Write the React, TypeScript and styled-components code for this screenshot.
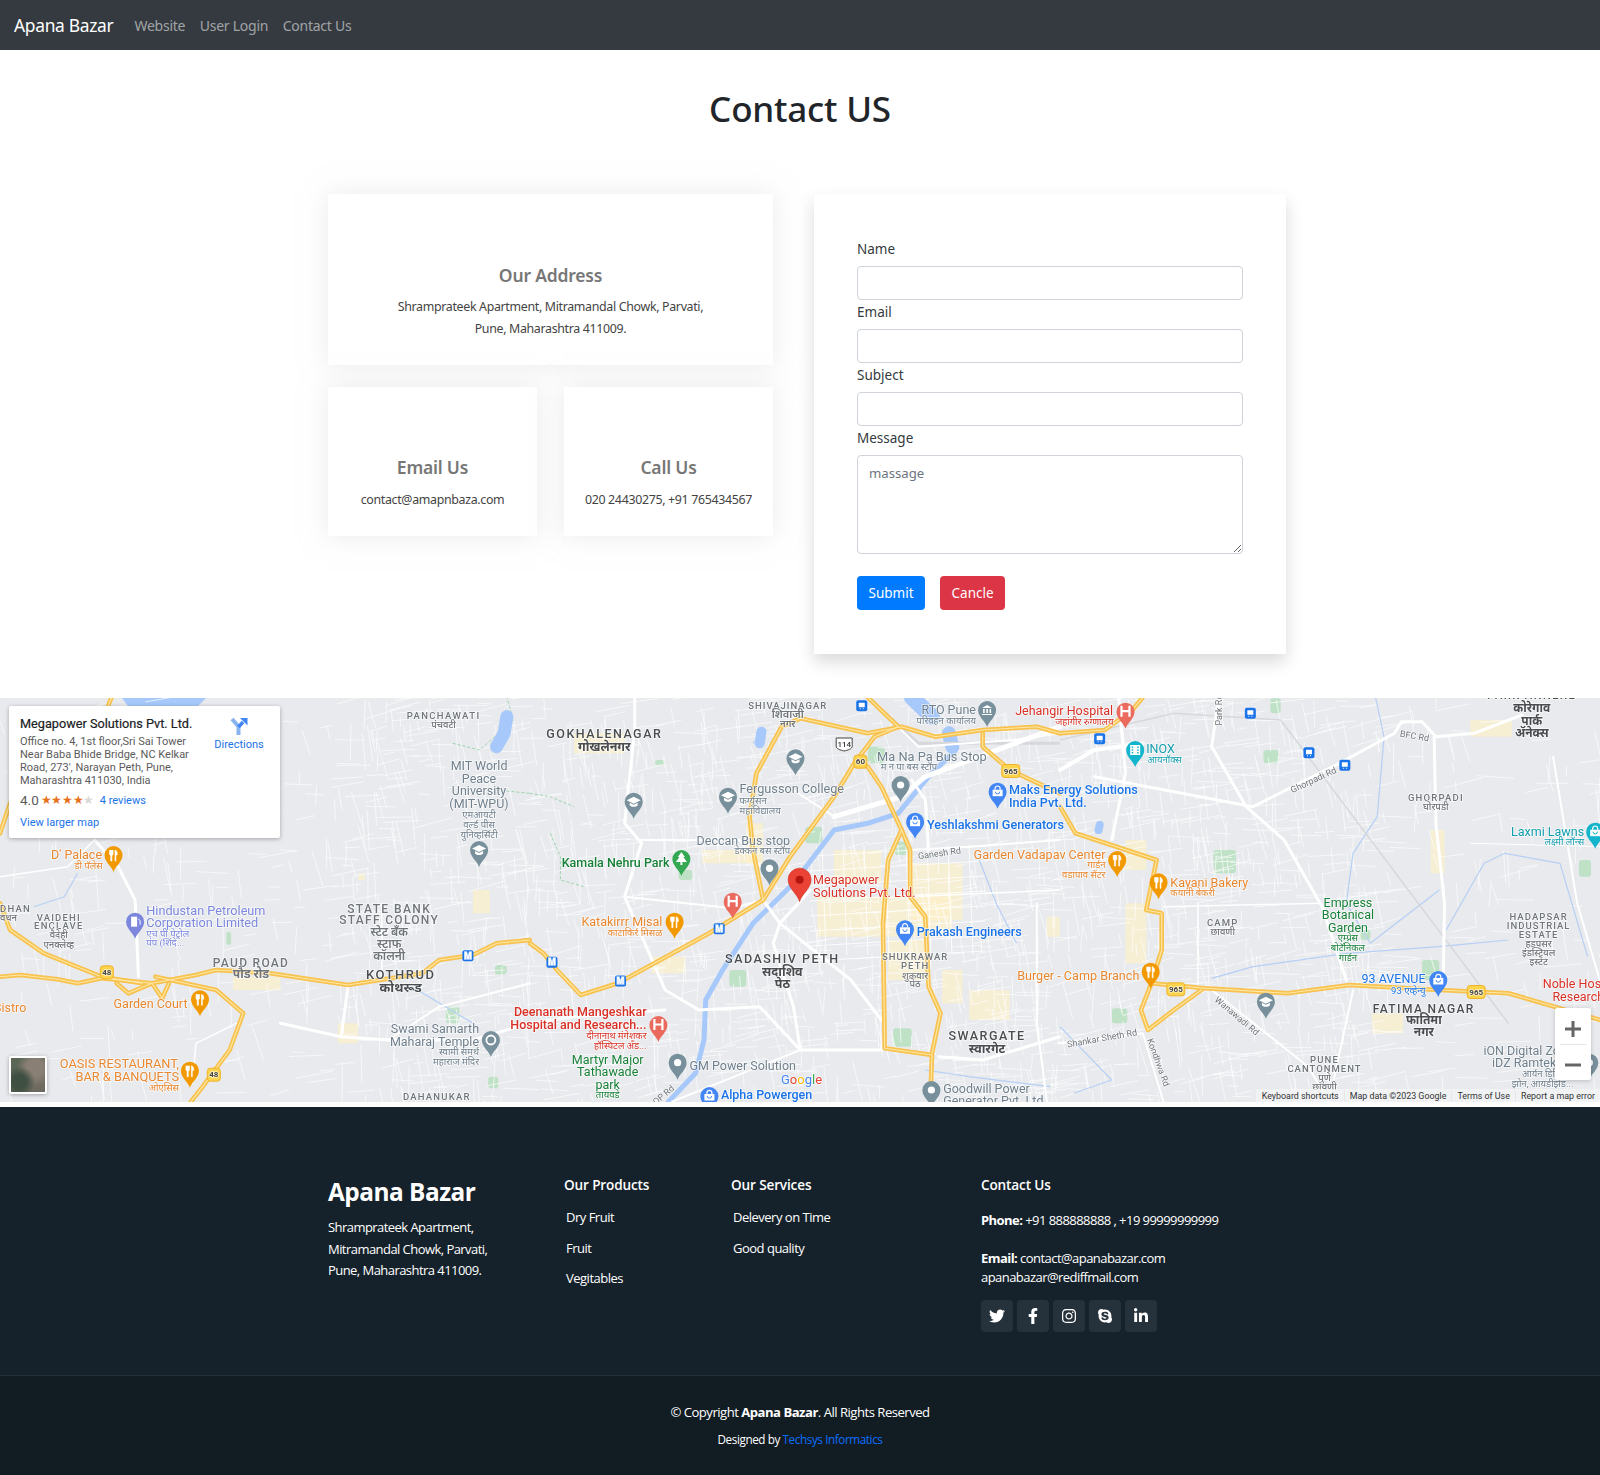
import React from 'react';
import styled, { createGlobalStyle } from 'styled-components';
import { FaTwitter, FaFacebookF, FaInstagram, FaSkype, FaLinkedinIn } from 'react-icons/fa';

const Global = createGlobalStyle`
  html, body { margin: 0; padding: 0; background: #fff; }
  body { font-family: "Noto Sans", "Open Sans", sans-serif; color: #212529; }
  * { box-sizing: border-box; }
`;

const Nav = styled.nav`
  height: 50px; background: #343a40; display: flex; align-items: center; padding: 0 14px;
`;
const Brand = styled.a`
  color: #fff; font-size: 17.4px; margin-right: 21px; letter-spacing: -0.3px;
`;
const NavLink = styled.a`
  color: rgba(255,255,255,.55); font-size: 14px; margin-right: 14.5px; letter-spacing: -0.25px;
`;
const Title = styled.h1`
  margin: 0; padding-top: 33px; height: 144px; text-align: center; font-size: 35px; font-weight: 500; line-height: 52px; letter-spacing: -0.2px;
`;
const Contact = styled.section`
  display: grid; grid-template-columns: 445px 472px; column-gap: 41px; padding-left: 328px; padding-bottom: 44px; align-items: start;
`;
const LeftCol = styled.div`
  display: grid; grid-template-columns: 209px 209px; column-gap: 27px; row-gap: 22px;
`;
const InfoBox = styled.div<{ $wide?: boolean }>`
  grid-column: ${p => (p.$wide ? '1 / 3' : 'auto')};
  height: ${p => (p.$wide ? '171px' : '149px')};
  padding-top: ${p => (p.$wide ? '68px' : '67px')};
  text-align: center; background: #fff; box-shadow: 0 0 24px rgba(214,215,216,.5);
`;
const BoxHead = styled.h3<{ $mb: number }>`
  margin: 0 0 ${p => p.$mb}px; font-size: 17.5px; line-height: 26px; font-weight: 600; color: #777; letter-spacing: -0.2px;
`;
const BoxText = styled.p`
  margin: 0; font-size: 12.4px; line-height: 22px; color: #444; letter-spacing: -0.33px;
`;
const FormCard = styled.form`
  height: 460px; padding: 43px 43px 0; background: #fff; box-shadow: 0 8px 16px rgba(0,0,0,.15);
`;
const Label = styled.label`
  display: block; font-size: 13.5px; line-height: 24px; height: 29px; color: #343a40;
`;
const Input = styled.input`
  display: block; width: 100%; height: 34px; border: 1px solid #ced4da; border-radius: 4px; background: #fff;
`;
const Area = styled.textarea`
  display: block; width: 100%; height: 99px; padding: 6px 11px; border: 1px solid #ced4da; border-radius: 4px; font: 13.2px "Noto Sans", sans-serif; line-height: 22px; resize: vertical;
  &::placeholder { color: #6c757d; }
`;
const Buttons = styled.div`
  display: flex; gap: 15px; margin-top: 22px;
`;
const Btn = styled.button<{ $bg: string }>`
  height: 34px; padding: 0 11.5px; border: 0; border-radius: 4px; background: ${p => p.$bg}; color: #fff; font: 13.5px "Noto Sans", sans-serif;
`;
const MapWrap = styled.div`
  position: relative; height: 404px; overflow: hidden; background: #e8eaed;
`;
const MapSvg = styled.svg`
  display: block; width: 1600px; height: 404px; font-family: Roboto, "Noto Sans", sans-serif; filter: blur(.3px);
`;
const Minor = styled.line`
  stroke: #fcfcfd; stroke-width: 1; opacity: .72;
`;
const Grid = styled.line`
  stroke: #fff; stroke-width: 1; opacity: .8;
`;
const RoadLine = styled.polyline<{ $w?: number }>`
  fill: none; stroke: #fff; stroke-width: ${p => p.$w ?? 3}; stroke-linejoin: round; stroke-linecap: round;
`;
const HighOuter = styled.polyline`
  fill: none; stroke: #f8c24f; stroke-width: 4.6; stroke-linejoin: round; stroke-linecap: round;
`;
const HighInner = styled.polyline`
  fill: none; stroke: #fde8a8; stroke-width: 1.1; stroke-linejoin: round; stroke-linecap: round;
`;
const River = styled.polyline<{ $w?: number }>`
  fill: none; stroke: #a6c8fa; stroke-width: ${p => p.$w ?? 4}; stroke-linejoin: round; stroke-linecap: round;
`;
const Creek = styled.polyline`
  fill: none; stroke: #b6cff5; stroke-width: 1.2; stroke-linejoin: round;
`;
const Trail = styled.polyline`
  fill: none; stroke: #9ed3ad; stroke-width: 1; stroke-dasharray: 3 2;
`;
const MapText = styled.text<{ $c: string; $s: number; $w?: number; $ls?: number }>`
  fill: ${p => p.$c}; font-size: ${p => p.$s}px; font-weight: ${p => p.$w ?? 400}; letter-spacing: ${p => p.$ls ?? 0}px;
  dominant-baseline: central; paint-order: stroke; stroke: rgba(255,255,255,.7); stroke-width: 1.5px;
`;
const InfoWin = styled.div`
  position: absolute; left: 9px; top: 8px; width: 271px; height: 132px; background: #fff; box-shadow: 0 1px 4px rgba(0,0,0,.3); border-radius: 2px; font-family: Roboto, sans-serif; padding: 9px 11px 0 11px; display: flex; justify-content: space-between;
`;
const InfoMain = styled.div` width: 190px; `;
const PlaceName = styled.div` font-size: 12.7px; font-weight: 400; line-height: 17px; color: #202124; white-space: nowrap; -webkit-text-stroke: .2px #202124; `;
const PlaceAddr = styled.div` font-size: 11px; line-height: 13px; color: #5b5b5b; margin-top: 3px; white-space: nowrap; `;
const Rating = styled.div` display: flex; align-items: center; height: 20px; margin-top: 3px; font-size: 13.5px; color: #5b5b5b; `;
const Stars = styled.span` color: #e7711b; font-size: 11.5px; margin-left: 2px; letter-spacing: -0.4px; `;
const GrayStar = styled.span` color: #d8d8d8; `;
const BlueLink = styled.a<{ $ml?: number; $mt?: number }>`
  color: #1a73e8; font-size: 11px; margin-left: ${p => p.$ml ?? 0}px; margin-top: ${p => p.$mt ?? 0}px; display: block; white-space: nowrap;
`;
const DirBox = styled.div` display: flex; flex-direction: column; align-items: center; width: 48px; margin-right: 6px; padding-top: 2px; `;
const Thumb = styled.div`
  position: absolute; left: 9px; bottom: 8px; width: 38px; height: 38px; border: 2px solid #fff; border-radius: 2px; box-shadow: 0 1px 4px rgba(0,0,0,.3); overflow: hidden;
  background: radial-gradient(circle at 25% 70%, #3f4f42 0 20%, transparent 45%), radial-gradient(circle at 70% 30%, #8a7f74 0 25%, transparent 55%), radial-gradient(circle at 75% 80%, #6e6a60 0 20%, transparent 50%), #5a6656;
`;
const Zoom = styled.div`
  position: absolute; right: 9px; top: 310px; width: 36px; height: 72px; background: #fff; border-radius: 2px; box-shadow: 0 1px 4px rgba(0,0,0,.2); display: flex; flex-direction: column; align-items: center; justify-content: space-around;
`;
const ZoomSep = styled.div` position: absolute; left: 5px; right: 5px; top: 36px; height: 1px; background: #e6e6e6; `;
const Attrib = styled.div`
  position: absolute; right: 0; bottom: 0; height: 13px; display: flex; align-items: center; background: rgba(245,245,245,.7); font: 8.9px Roboto, sans-serif; color: #333; padding-left: 1px;
`;
const AttribItem = styled.span` padding: 0 5px; white-space: nowrap; border-right: 1px solid #e6e6e6; &:last-child { border: 0; } `;
const Gap = styled.div` height: 5px; background: #fff; `;

const FooterTop = styled.footer`
  height: 269px; background: #16222b; color: #fff; border-bottom: 1px solid #22303b; padding: 62px 0 0 328px; display: grid; grid-template-columns: 236px 167px 250px 320px; font-family: "Open Sans", sans-serif;
`;
const FootBrand = styled.h3` margin: 8px 0 10px; font-size: 24.4px; line-height: 30px; font-weight: 700; letter-spacing: -0.5px; `;
const FootP = styled.p` margin: 0; font-size: 13px; line-height: 21.5px; letter-spacing: -0.55px; `;
const FootHead = styled.h4` margin: 0 0 12px; padding-top: 6px; font-size: 13.6px; line-height: 20px; font-weight: 600; letter-spacing: -0.15px; `;
const FootList = styled.ul` margin: 0; padding: 0 0 0 2px; list-style: none; `;
const FootItem = styled.li` font-size: 13px; height: 30.5px; line-height: 20px; letter-spacing: -0.5px; `;
const ContactLine = styled.p<{ $mt?: number }>` margin: ${p => p.$mt ?? 0}px 0 0; font-size: 13px; line-height: 19px; letter-spacing: -0.55px; white-space: nowrap; `;
const Socials = styled.div` display: flex; gap: 4px; margin-top: 13px; `;
const Social = styled.a`
  width: 32px; height: 32px; border-radius: 4px; background: #26323b; display: flex; align-items: center; justify-content: center; color: #fff; font-size: 16px;
`;
const FooterBottom = styled.div`
  height: 99px; background: #121c23; color: #fff; text-align: center; font-family: "Open Sans", sans-serif; padding-top: 26px;
`;
const Copy = styled.div` font-size: 13.1px; line-height: 20px; letter-spacing: -0.5px; `;
const Credit = styled.div` font-size: 11.7px; line-height: 20px; margin-top: 7px; letter-spacing: -0.4px; `;
const CreditLink = styled.a` color: #0d6efd; `;

const X0 = [0, 0, 0, 0, 530, 1060];
const F = [1, 1, 1, 2.96, 2.96, 2.9];
const X = (z: number, x: number) => X0[z] + x / F[z];
const Y = (y: number) => 690 + y / 3;
const pts = (z: number, a: number[][]) => a.map(([x, y]) => `${X(z, x).toFixed(1)},${Y(y).toFixed(1)}`).join(' ');

const highways: [number, number[][]][] = [
  [3, [[0, 860], [60, 855], [170, 868], [230, 880], [300, 865], [450, 880], [580, 855], [640, 840], [800, 850], [1030, 885], [1250, 850], [1300, 810], [1400, 795], [1470, 760], [1568, 750]]],
  [4, [[0, 760], [40, 790], [80, 840], [150, 915], [260, 880], [530, 730], [690, 630], [660, 480], [650, 380], [670, 250], [745, 110], [800, 85], [1000, 130], [1100, 110], [1200, 140], [1340, 120], [1500, 110], [1568, 130]]],
  [4, [[690, 630], [770, 500], [900, 320], [960, 220], [1020, 140], [1090, 110], [1000, 22]]],
  [4, [[960, 220], [1000, 230], [1040, 290], [1100, 420], [1060, 510], [1045, 700], [1050, 1075], [1190, 1095], [1185, 1235]]],
  [4, [[1100, 420], [1125, 480], [1125, 620], [1170, 680], [1180, 890], [1215, 970], [1190, 1090]]],
  [4, [[1340, 130], [1340, 170], [1420, 240], [1568, 310]]],
  [5, [[0, 130], [130, 120], [210, 60], [240, 22]]],
  [5, [[0, 350], [45, 430], [280, 510], [250, 660], [295, 670], [295, 780], [265, 880], [420, 895], [660, 910], [840, 885], [1100, 900], [1300, 910], [1568, 990]]],
  [5, [[265, 880], [235, 960], [255, 1020], [330, 960], [410, 900]]],
  [3, [[0, 640], [30, 720], [130, 790], [300, 860], [420, 880]]],
  [3, [[460, 860], [640, 900], [720, 970], [680, 1080], [600, 1190], [565, 1235]]],
  [3, [[345, 880], [380, 910], [450, 880], [480, 925], [500, 880]]],
  [3, [[330, 22], [320, 48]]],
  [3, [[0, 430], [30, 340]]],
];
const roads: [number, number[][], number?][] = [
  [3, [[280, 450], [350, 530], [400, 630], [410, 860]], 3],
  [3, [[1030, 890], [1010, 1040]], 3],
  [3, [[830, 1000], [1010, 1040], [1150, 1050], [1400, 1050], [1568, 1000]], 3],
  [3, [[1568, 880], [1300, 950], [1150, 1050]], 2],
  [3, [[1130, 640], [1130, 860]], 1.5],
  [3, [[700, 1000], [580, 1060], [570, 1180]], 1.5],
  [3, [[0, 560], [200, 530], [280, 450]], 1.5],
  [4, [[310, 22], [310, 120], [280, 400], [330, 460], [280, 620], [400, 900], [500, 960], [680, 950], [800, 1080], [1040, 1080]], 3],
  [4, [[330, 450], [620, 450], [690, 540]], 2],
  [4, [[280, 620], [600, 655], [690, 630]], 2],
  [4, [[0, 1000], [130, 980], [400, 960]], 3],
  [4, [[690, 630], [740, 700], [950, 870], [1040, 990]], 3],
  [4, [[740, 700], [720, 760], [780, 950], [800, 1080]], 3],
  [4, [[830, 600], [740, 700]], 3],
  [4, [[900, 380], [1100, 320], [1170, 260], [1568, 110]], 5],
  [4, [[780, 300], [900, 380]], 2],
  [4, [[1130, 270], [1170, 330], [1180, 480]], 3],
  [4, [[1000, 22], [1150, 170], [1430, 150], [1568, 130]], 2],
  [4, [[1210, 1100], [1340, 1110], [1568, 1040]], 3],
  [4, [[420, 1235], [800, 1080]], 2],
  [4, [[1500, 640], [1500, 1000], [1530, 1235]], 2],
  [4, [[1125, 480], [1300, 470], [1568, 450]], 2],
  [4, [[1125, 620], [1568, 600]], 1.5],
  [5, [[0, 240], [100, 180], [240, 160]], 4],
  [5, [[170, 20], [190, 250], [150, 450]], 3],
  [5, [[100, 260], [560, 350], [810, 220], [970, 130], [990, 95], [1050, 95], [1090, 140], [1200, 130], [1340, 75]], 3],
  [5, [[460, 20], [440, 170], [540, 350], [650, 450], [760, 650], [830, 870]], 3],
  [5, [[1085, 140], [1090, 400], [1115, 640], [1112, 860]], 3],
  [5, [[440, 900], [720, 1130], [780, 1235]], 2],
  [5, [[0, 1060], [240, 1030], [300, 1235]], 2],
  [5, [[850, 900], [780, 1235]], 2],
  [5, [[1430, 200], [1500, 640], [1568, 880]], 2],
  [5, [[1190, 460], [1568, 470]], 1],
  [5, [[300, 650], [750, 640]], 1.5],
  [5, [[400, 640], [400, 900]], 1.5],
];
const rivers: [number, number[][], number?][] = [
  [4, [[1240, 120], [1260, 180], [1180, 260], [1090, 370], [1000, 400], [900, 420], [780, 580], [660, 700], [570, 840], [520, 930], [515, 1050], [490, 1150], [410, 1235]], 5],
  [4, [[1130, 22], [1190, 80]], 16],
  [4, [[1240, 130], [1250, 170]], 14],
  [3, [[1500, 80], [1492, 130], [1470, 170]], 13],
  [4, [[685, 125], [680, 160]], 10],
  [5, [[115, 405], [112, 420]], 8],
];
const creeks: [number, number[][]][] = [
  [3, [[230, 550], [190, 620], [100, 650]]],
  [3, [[1220, 890], [1400, 1000]]],
  [5, [[440, 865], [560, 830], [830, 790], [1100, 770], [1300, 750]]],
  [5, [[1100, 600], [900, 760], [830, 640], [850, 490], [920, 380], [940, 140], [915, 22]]],
  [5, [[1120, 720], [1230, 520], [1290, 490], [1450, 520], [1530, 800]]],
  [5, [[0, 1010], [150, 1170], [40, 1210]]],
  [4, [[700, 120], [660, 160]]],
  [4, [[1330, 510], [1380, 640], [1440, 760]]],
  [4, [[1170, 1140], [1300, 1160], [1540, 1190]]],
];
const trails: [number, number[][]][] = [
  [3, [[1340, 160], [1420, 180], [1520, 90], [1500, 22]]],
  [3, [[1470, 300], [1568, 310]]],
  [4, [[0, 310], [60, 320], [130, 350]]],
  [4, [[60, 430], [90, 500], [90, 570], [160, 590]]],
];
const parks: [number, number, number, number, number][] = [
  [3, 1465, 825, 35, 28], [3, 1445, 1160, 30, 35], [3, 670, 725, 14, 40], [3, 1320, 950, 40, 50],
  [4, 590, 840, 50, 50], [4, 815, 410, 50, 50], [4, 1000, 170, 50, 50], [4, 1080, 455, 36, 40], [4, 1075, 1015, 55, 55], [4, 440, 540, 40, 30], [4, 370, 210, 30, 15],
  [5, 590, 180, 45, 40], [5, 445, 480, 65, 70], [5, 150, 955, 45, 45], [5, 1505, 510, 35, 50], [5, 1050, 810, 50, 60], [5, 870, 720, 30, 30], [5, 610, 25, 30, 45],
];
const blocks: [number, number, number, number, number][] = [
  [4, 850, 620, 400, 120], [4, 900, 480, 140, 100], [4, 1130, 520, 150, 170], [4, 1060, 750, 110, 120], [4, 640, 400, 50, 120], [4, 510, 480, 150, 40], [4, 1300, 900, 120, 90], [4, 130, 130, 150, 60], [4, 360, 800, 100, 50], [4, 1220, 840, 60, 100], [4, 1530, 680, 38, 60],
  [5, 190, 450, 60, 90], [5, 190, 640, 60, 180], [5, 905, 970, 90, 60], [5, 1075, 420, 40, 130], [5, 1190, 90, 120, 50],
  [3, 1000, 1000, 60, 60], [3, 1400, 600, 50, 70], [3, 1060, 550, 20, 20], [3, 690, 860, 140, 40],
];

type L = [number, number, number, string, string?, number?, number?, number?, number?];
// zone, x, y, text, anchor, size, weight, spacing, rotate
const C = { g: '#70757a', d: '#4a4d50', o: '#e8872f', b: '#1a73e8', r: '#d93025', v: '#7b86dc', gr: '#188038', t: '#129eaf', s: '#6f7f8c' };
const labels: [string, L[]][] = [
  [C.g, [
    [3, 1313, 77, 'PANCHAWATI', 'middle', 9.5, 500, 1.4], [3, 1313, 103, 'पंचवटी', 'middle', 9.5, 500],
    [3, 0, 656, 'DHAN', 'start', 9.5, 500, 1.2], [3, 0, 682, 'वधन', 'start', 9.5, 500],
    [3, 174, 681, 'VAIDEHI', 'middle', 9.5, 500, 1.2], [3, 174, 707, 'ENCLAVE', 'middle', 9.5, 500, 1.2], [3, 174, 733, 'वैदेही', 'middle', 9.5, 500], [3, 174, 763, 'एनक्लेव्ह', 'middle', 9.5, 500],
    [3, 1152, 657, 'STATE BANK', 'middle', 12, 500, 1.4], [3, 1152, 691, 'STAFF COLONY', 'middle', 12, 500, 1.3], [3, 1152, 726, 'स्टेट बँक', 'middle', 12, 600], [3, 1152, 763, 'स्टाफ', 'middle', 12, 600], [3, 1152, 797, 'कॉलनी', 'middle', 12, 600],
    [3, 743, 818, 'PAUD ROAD', 'middle', 12, 500, 1.3], [3, 743, 853, 'पौड रोड', 'middle', 12, 700],
    [3, 1293, 1220, 'DAHANUKAR', 'middle', 9.5, 500, 1.2],
    [4, 763, 47, 'SHIVAJINAGAR', 'middle', 9.5, 500, 1], [4, 763, 74, 'शिवाजी', 'middle', 11, 600], [4, 763, 100, 'नगर', 'middle', 9.5, 600],
    [4, 1140, 799, 'SHUKRAWAR', 'middle', 9.5, 500, 1], [4, 1140, 826, 'PETH', 'middle', 9.5, 500, 1.1], [4, 1140, 855, 'शुक्रवार', 'middle', 9.5, 500], [4, 1140, 880, 'पेठ', 'middle', 9.5, 500],
    [4, 1212, 490, 'Ganesh Rd', 'middle', 9, 400, 0, -8], [4, 395, 1215, 'OP Rd', 'middle', 9, 400, 0, -40],
    [5, 1028, 138, 'BFC Rd', 'middle', 9, 400, 0, 10], [5, 462, 60, 'Park Rd', 'middle', 9, 400, 0, -90], [5, 735, 270, 'Ghorpadi Rd', 'middle', 9, 400, 0, -25],
    [5, 1090, 322, 'GHORPADI', 'middle', 9.5, 500, 1.2], [5, 1090, 348, 'घोरपडी', 'middle', 9.5, 500],
    [5, 472, 697, 'CAMP', 'middle', 9.5, 500, 1.2], [5, 472, 723, 'छावणी', 'middle', 9.5, 500],
    [5, 1388, 678, 'HADAPSAR', 'middle', 9.5, 500, 1.1], [5, 1388, 705, 'INDUSTRIAL', 'middle', 9.5, 500, 1], [5, 1388, 732, 'ESTATE', 'middle', 9.5, 500, 1.1], [5, 1388, 760, 'हडपसर', 'middle', 9.5, 500], [5, 1388, 786, 'इंडस्ट्रियल', 'middle', 9.5, 500], [5, 1388, 813, 'इस्टेट', 'middle', 9.5, 500],
    [5, 513, 978, 'Wanawadi Rd', 'middle', 9, 400, 0, 40], [5, 122, 1045, 'Shankar Sheth Rd', 'middle', 9, 400, 0, -10], [5, 285, 1117, 'Kondhwa Rd', 'middle', 9, 400, 0, 70],
    [5, 767, 1109, 'PUNE', 'middle', 9.5, 500, 1.1], [5, 767, 1136, 'CANTONMENT', 'middle', 9.5, 500, 1], [5, 767, 1163, 'पुणे', 'middle', 9.5, 500], [5, 767, 1190, 'छावणी', 'middle', 9.5, 500],
  ]],
  [C.d, [
    [3, 1186, 853, 'KOTHRUD', 'middle', 13, 500, 1.5], [3, 1186, 891, 'कोथरूड', 'middle', 13, 700],
    [4, 220, 131, 'GOKHALENAGAR', 'middle', 12.5, 500, 1.5], [4, 220, 168, 'गोखलेनगर', 'middle', 12.5, 700],
    [4, 747, 806, 'SADASHIV PETH', 'middle', 12.5, 500, 1.5], [4, 747, 844, 'सदाशिव', 'middle', 12.5, 700], [4, 747, 881, 'पेठ', 'middle', 12.5, 700],
    [4, 1353, 1037, 'SWARGATE', 'middle', 12.5, 500, 1.5], [4, 1353, 1075, 'स्वारगेट', 'middle', 12.5, 700],
    [5, 1368, 15, 'PARK ANNEXE', 'middle', 11, 500, 1.5], [5, 1368, 55, 'कोरेगाव', 'middle', 12, 700], [5, 1368, 92, 'पार्क', 'middle', 12, 700], [5, 1368, 128, 'ॲनेक्स', 'middle', 12, 700],
    [5, 1055, 956, 'FATIMA NAGAR', 'middle', 12, 500, 1.4], [5, 1055, 991, 'फातिमा', 'middle', 12, 700], [5, 1055, 1026, 'नगर', 'middle', 12, 700],
  ]],
  [C.s, [
    [3, 1418, 226, 'MIT World', 'middle', 12.5], [3, 1418, 264, 'Peace', 'middle', 12.5], [3, 1418, 302, 'University', 'middle', 12.5], [3, 1418, 340, '(MIT-WPU)', 'middle', 12.5],
    [3, 1418, 373, 'एमआयटी', 'middle', 9.5], [3, 1418, 402, 'वर्ल्ड पीस', 'middle', 9.5], [3, 1418, 432, 'युनिव्हर्सिटी', 'middle', 9.5],
    [3, 1418, 1016, 'Swami Samarth', 'end', 12.5], [3, 1418, 1053, 'Maharaj Temple', 'end', 12.5], [3, 1418, 1085, 'स्वामी समर्थ', 'end', 9.5], [3, 1418, 1114, 'महाराज मंदिर', 'end', 9.5],
    [4, 1320, 58, 'RTO Pune', 'end', 12.5], [4, 1320, 90, 'परिवहन कार्यालय', 'end', 9.5],
    [4, 1352, 200, 'Ma Na Pa Bus Stop', 'end', 12.8], [4, 1205, 230, 'म न पा बस स्टॉप', 'end', 9.5],
    [4, 620, 296, 'Fergusson College', 'start', 12.7], [4, 620, 330, 'फर्ग्युसन', 'start', 9.5], [4, 620, 360, 'महाविद्यालय', 'start', 9.5],
    [4, 770, 450, 'Deccan Bus stop', 'end', 12.5], [4, 770, 481, 'डेक्कन बस स्टॉप', 'end', 9.5],
    [4, 472, 1127, 'GM Power Solution', 'start', 12.5], [4, 1223, 1194, 'Goodwill Power', 'start', 12.5], [4, 1223, 1230, 'Generator Pvt. Ltd', 'start', 12.5],
    [5, 1228, 1080, 'iON Digital Zone', 'start', 12.5], [5, 1253, 1118, 'iDZ Ramtekdi', 'start', 12.5], [5, 1340, 1150, 'आर्यन डिजिटल', 'start', 9.5], [5, 1310, 1180, 'झोन, आयडीझेड...', 'start', 9.5],
  ]],
  [C.o, [
    [3, 302, 492, "D' Palace", 'end', 12.5], [3, 304, 525, 'डी पॅलेस', 'end', 9.5], [3, 78, 951, 'Bistro', 'end', 12.5], [3, 555, 940, 'Garden Court', 'end', 12.5],
    [3, 530, 1120, 'OASIS RESTAURANT,', 'end', 12.8], [3, 530, 1158, 'BAR & BANQUETS', 'end', 12.8], [3, 530, 1192, 'ओएसिस', 'end', 9.5],
    [4, 392, 695, 'Katakirrr Misal', 'end', 12.5], [4, 392, 726, 'काटाकिर्र मिसळ', 'end', 9.5],
    [4, 1313, 492, 'Garden Vadapav Center', 'start', 12.6], [5, 132, 523, 'गार्डन', 'end', 9.5], [5, 132, 553, 'वडापाव सेंटर', 'end', 9.5],
    [4, 1442, 857, 'Burger - Camp Branch', 'start', 12.6],
    [5, 320, 576, 'Kayani Bakery', 'start', 12.5], [5, 320, 607, 'कयानी बेकरी', 'start', 9.5],
  ]],
  [C.b, [
    [4, 1145, 725, 'Prakash Engineers', 'start', 12.6, 500], [4, 1175, 404, 'Yeshlakshmi Generators', 'start', 12.6, 500], [4, 1418, 299, 'Maks Energy Solutions', 'start', 12.6, 500], [4, 1418, 336, 'India Pvt. Ltd.', 'start', 12.6, 500],
    [4, 565, 1213, 'Alpha Powergen', 'start', 12.5, 500], [5, 1060, 865, '93 AVENUE', 'end', 12.5], [5, 1060, 900, '93 एव्हेन्यु', 'end', 9.5],
  ]],
  [C.r, [
    [4, 345, 965, 'Deenanath Mangeshkar', 'end', 12.5, 500], [4, 345, 1002, 'Hospital and Research...', 'end', 12.5, 500], [4, 345, 1036, 'दीनानाथ मंगेशकर', 'end', 9.5], [4, 345, 1066, 'हॉस्पिटल अँड...', 'end', 9.5],
    [4, 838, 569, 'Megapower', 'start', 12.5], [4, 838, 606, 'Solutions Pvt. Ltd.', 'start', 12.7],
    [4, 1436, 62, 'Jehangir Hospital', 'start', 12.5], [5, 155, 95, 'जहांगीर रुग्णालय', 'end', 9.5], [5, 1400, 881, 'Noble Hospital', 'start', 12.5], [5, 1428, 918, 'Research', 'start', 12.5],
  ]],
  [C.v, [
    [3, 433, 660, 'Hindustan Petroleum', 'start', 12.7], [3, 433, 697, 'Corporation Limited', 'start', 12.7], [3, 433, 729, 'एच पी पेट्रोल', 'start', 9.5], [3, 433, 758, 'पंप (शिंदे...', 'start', 9.5],
  ]],
  [C.gr, [
    [4, 413, 517, 'Kamala Nehru Park', 'end', 12.5, 500], [4, 230, 1107, 'Martyr Major', 'middle', 12.5], [4, 230, 1145, 'Tathawade', 'middle', 12.5], [4, 230, 1184, 'park', 'middle', 12.5], [4, 230, 1214, 'तायवडे', 'middle', 9.5],
    [5, 835, 636, 'Empress', 'middle', 12.5], [5, 835, 673, 'Botanical', 'middle', 12.5], [5, 835, 711, 'Garden', 'middle', 12.5], [5, 835, 743, 'एम्प्रेस', 'middle', 9.5], [5, 835, 772, 'बोटॅनिकल', 'middle', 9.5], [5, 835, 801, 'गार्डन', 'middle', 9.5],
  ]],
  [C.t, [
    [5, 250, 175, 'INOX', 'start', 12.5], [5, 253, 208, 'आयनॉक्स', 'start', 9.5], [5, 1520, 423, 'Laxmi Lawns', 'end', 12.5], [5, 1520, 453, 'लक्ष्मी लॉन्स', 'end', 9.5],
  ]],
];

type Kind = 'food' | 'edu' | 'shop' | 'h' | 'dot' | 'tree' | 'fuel' | 'temple' | 'film' | 'om';
const pins: [number, number, number, string, Kind][] = [
  [3, 336, 495, '#f29900', 'food'], [3, 592, 928, '#f29900', 'food'], [3, 562, 1142, '#f29900', 'food'], [3, 1418, 480, '#78909c', 'edu'], [3, 1453, 1050, '#78909c', 'om'], [3, 400, 695, '#7b86dc', 'fuel'],
  [4, 307, 335, '#78909c', 'edu'], [4, 586, 320, '#78909c', 'edu'], [4, 786, 205, '#78909c', 'edu'], [4, 1097, 285, '#78909c', 'dot'], [4, 709, 535, '#78909c', 'dot'], [4, 437, 1118, '#78909c', 'dot'], [4, 1188, 1200, '#78909c', 'dot'],
  [4, 448, 507, '#34a853', 'tree'], [4, 600, 635, '#ea6a5e', 'h'], [4, 428, 695, '#f29900', 'food'], [4, 380, 1005, '#ea6a5e', 'h'], [4, 1140, 395, '#4285f4', 'shop'], [4, 1110, 718, '#4285f4', 'shop'], [4, 1384, 305, '#4285f4', 'shop'], [4, 531, 1218, '#4285f4', 'shop'], [4, 1353, 60, '#78909c', 'temple'],
  [5, 190, 65, '#ea6a5e', 'h'], [5, 218, 180, '#12b5cb', 'film'], [5, 166, 510, '#f29900', 'food'], [5, 286, 577, '#f29900', 'food'], [5, 263, 845, '#f29900', 'food'], [5, 597, 935, '#78909c', 'edu'], [5, 1097, 870, '#4285f4', 'shop'], [5, 1552, 425, '#12b5cb', 'shop'], [5, 1535, 1118, '#78909c', 'dot'],
];
const metros: [number, number, number][] = [[3, 1385, 797], [4, 560, 716], [4, 268, 873], [4, 65, 817]];
const trains: [number, number, number][] = [[4, 982, 47], [5, 115, 146], [5, 552, 70], [5, 722, 188], [5, 826, 226]];
const shields: [number, number, number, string][] = [[3, 316, 847, '48'], [3, 633, 1154, '48'], [4, 978, 215, '60'], [4, 1423, 243, '965'], [5, 336, 898, '965'], [5, 1207, 906, '965']];

function PinGlyph({ k }: { k: Kind }) {
  switch (k) {
    case 'food': return <path d="M-4 -5v4a1.500 1.500 0 0 0 1.200 1.400V6h1.200V.4A1.500 1.500 0 0 0 -.4 -1v-4M-2.200 -5v3.500M1.500 -5c2 .5 2.500 2.500 2.200 5H2.400V6H1.500z" fill="#fff" stroke="#fff" strokeWidth=".6" />;
    case 'edu': return <g fill="#fff"><path d="M0 -5L7 -1.500 0 2 -7 -1.500z" /><path d="M-4 1v2.500C-2 5.500 2 5.500 4 3.500V1L0 3z" /></g>;
    case 'shop': return <g><path d="M-5 -2h10v6.500h-10z" fill="#fff" /><path d="M-2.500 -2v-1.200a2.500 2.500 0 0 1 5 0V-2" stroke="#fff" strokeWidth="1.200" fill="none" /><path d="M-2.200 0a2.200 2.200 0 0 0 4.400 0" stroke="currentColor" fill="none" /></g>;
    case 'h': return <path d="M-4 -6v11M4 -6v11M-4 -.5h8" stroke="#fff" strokeWidth="2.200" fill="none" />;
    case 'dot': return <circle r="3.600" fill="#fff" />;
    case 'tree': return <path d="M0 -7l3.500 5H2l3.500 5H1V6H-1V3H-5.500L-2 -2H-3.500z" fill="#fff" />;
    case 'fuel': return <g fill="#fff"><path d="M-4 -5h6v10h-6z" /><path d="M3 -3l2 2v4" stroke="#fff" fill="none" /></g>;
    case 'temple': return <path d="M-5 -2L0 -5 5 -2zM-4 -1h1.600v4H-4zM-.8 -1H.8v4H-.8zM2.400 -1H4v4H2.400zM-5 4h10v1h-10z" fill="#fff" />;
    case 'film': return <path d="M-5 -5h10v10h-10z M-3.500 -3.500v1.500h1.500v-1.500z M-3.500 -.7v1.500h1.500v-1.500z M-3.500 2v1.500h1.500V2z M2 -3.500v1.500h1.500v-1.500z M2 -.7v1.500h1.500v-1.500z M2 2v1.500h1.500V2z" fill="#fff" fillRule="evenodd" />;
    case 'om': return <circle r="4.500" fill="none" stroke="#fff" strokeWidth="1.800" />;
  }
}

function Pin({ x, y, c, k }: { x: number; y: number; c: string; k: Kind }) {
  return (
    <g transform={`translate(${x.toFixed(1)} ${y.toFixed(1)})`} color={c}>
      <path d="M0 17C-2 11-9 7-9 0A9 9 0 1 1 9 0C9 7 2 11 0 17Z" fill={c} />
      <PinGlyph k={k} />
    </g>
  );
}

function mulberry(seed: number) {
  let a = seed;
  return () => {
    a |= 0; a = (a + 0x6d2b79f5) | 0;
    let t = Math.imul(a ^ (a >>> 15), 1 | a);
    t = (t + Math.imul(t ^ (t >>> 7), 61 | t)) ^ t;
    return ((t ^ (t >>> 14)) >>> 0) / 4294967296;
  };
}
const streets = (() => {
  const r = mulberry(42);
  const out: number[][] = [];
  for (let i = 0; i < 2600; i++) {
    const cluster = r();
    const x = cluster < 0.62 ? 330 + r() * 1050 : r() * 1600;
    const y = 697 + r() * 404;
    const len = 10 + r() * 30;
    const base = r() < 0.5 ? -0.12 : 1.45;
    const ang = base + (r() - 0.5) * 0.4;
    out.push([x, y, x + Math.cos(ang) * len, y + Math.sin(ang) * len]);
  }
  return out;
})();
const gridLines = (() => {
  const out: number[][] = [];
  for (let y = 850; y < 960; y += 15) out.push([810, y + 6, 985, y - 4]);
  for (let x = 822; x < 985; x += 21) out.push([x, 845, x + 4, 955]);
  return out;
})();

function TheMap() {
  return (
    <MapSvg viewBox="0 698 1600 404">
      {blocks.map(([z, x, y, w, h], i) => <rect key={i} x={X(z, x)} y={Y(y)} width={w / F[z]} height={h / 3} fill="#fdf1c8" opacity=".7" />)}
      {parks.map(([z, x, y, w, h], i) => <rect key={i} x={X(z, x)} y={Y(y)} width={w / F[z]} height={h / 3} rx="3" fill="#bfe2c6" />)}
      <path d="M122 698h84l-8 8h-70z" fill="#a6c8fa" />
      {streets.map((s, i) => <Minor key={i} x1={s[0]} y1={s[1]} x2={s[2]} y2={s[3]} />)}
      {gridLines.map((s, i) => <Grid key={i} x1={s[0]} y1={s[1]} x2={s[2]} y2={s[3]} />)}
      {creeks.map(([z, a], i) => <Creek key={i} points={pts(z, a)} />)}
      {trails.map(([z, a], i) => <Trail key={i} points={pts(z, a)} />)}
      {rivers.map(([z, a, w], i) => <River key={i} points={pts(z, a)} $w={w} />)}
      <polyline points={pts(4, [[1000, 22], [1150, 160], [1568, 160]])} fill="none" stroke="#d6d8dc" strokeWidth="3" />
      <polyline points={pts(5, [[0, 150], [330, 70], [640, 90], [1300, 1000]])} fill="none" stroke="#d6d8dc" strokeWidth="1.500" />
      {roads.map(([z, a, w], i) => <RoadLine key={i} points={pts(z, a)} $w={w} />)}
      {highways.map(([z, a], i) => <HighOuter key={i} points={pts(z, a)} />)}
      {highways.map(([z, a], i) => <HighInner key={i} points={pts(z, a)} />)}
      {labels.map(([c, list]) => list.map(([z, x, y, t, an = 'middle', s = 12, w = 400, ls = 0, rot = 0], i) => (
        <MapText key={c + i} x={X(z, x)} y={Y(y)} $c={c} $s={s} $w={w} $ls={ls} textAnchor={an as 'start'}
          transform={rot ? `rotate(${rot} ${X(z, x)} ${Y(y)})` : undefined}>{t}</MapText>
      )))}
      {shields.map(([z, x, y, t], i) => (
        <g key={i} transform={`translate(${X(z, x)} ${Y(y)})`}>
          <rect x={t.length > 2 ? -9 : -6.5} y="-6.5" width={t.length > 2 ? 18 : 13} height="13" rx="3" fill="#fbd34d" stroke="#f0b429" />
          <MapText y="0" textAnchor="middle" $c="#444" $s={8} $w={700}>{t}</MapText>
        </g>
      ))}
      <g transform={`translate(${X(4, 930)} ${Y(162)})`}>
        <path d="M-8 -6h16v8c0 3-4 4-8 5-4-1-8-2-8-5z" fill="#fff" stroke="#444" />
        <MapText y="0" textAnchor="middle" $c="#333" $s={8} $w={500}>114</MapText>
      </g>
      {metros.map(([z, x, y], i) => (
        <g key={i} transform={`translate(${X(z, x)} ${Y(y)})`}>
          <rect x="-5.5" y="-5.5" width="11" height="11" rx="2" fill="#1a73e8" />
          <MapText y="0" textAnchor="middle" $c="#fff" $s={8.5} $w={700}>M</MapText>
        </g>
      ))}
      {trains.map(([z, x, y], i) => (
        <g key={i} transform={`translate(${X(z, x)} ${Y(y)})`}>
          <rect x="-5.5" y="-5.5" width="11" height="11" rx="2" fill="#1a73e8" />
          <path d="M-3 -3h6v4.500h-6zM-2 2.500h1v1h-1zM1 2.500h1v1H1z" fill="#fff" />
        </g>
      ))}
      {pins.map(([z, x, y, c, k], i) => <Pin key={i} x={X(z, x)} y={Y(y)} c={c} k={k} />)}
      <g transform={`translate(${X(4, 798)} ${Y(572)})`}>
        <path d="M0 21C-2 13-11.500 8-11.500 -1A11.500 11.500 0 1 1 11.500 -1C11.500 8 2 13 0 21Z" fill="#ea4335" stroke="#d33426" strokeWidth=".6" />
        <circle cy="-1" r="4" fill="#b3140e" />
      </g>
      <MapText x="781" y="1079" $c="#4285f4" $s={13} $w={400}>G<tspan fill="#ea4335">o</tspan><tspan fill="#fbbc04">o</tspan><tspan fill="#4285f4">g</tspan><tspan fill="#34a853">l</tspan><tspan fill="#ea4335">e</tspan></MapText>
    </MapSvg>
  );
}

export default function App() {
  return (
    <>
      <Global />
      <Nav>
        <Brand>Apana Bazar</Brand>
        <NavLink>Website</NavLink>
        <NavLink>User Login</NavLink>
        <NavLink>Contact Us</NavLink>
      </Nav>
      <Title>Contact US</Title>
      <Contact>
        <LeftCol>
          <InfoBox $wide>
            <BoxHead $mb={8}>Our Address</BoxHead>
            <BoxText>Shramprateek Apartment, Mitramandal Chowk, Parvati,<br />Pune, Maharashtra 411009.</BoxText>
          </InfoBox>
          <InfoBox>
            <BoxHead $mb={9}>Email Us</BoxHead>
            <BoxText>contact@amapnbaza.com</BoxText>
          </InfoBox>
          <InfoBox>
            <BoxHead $mb={9}>Call Us</BoxHead>
            <BoxText>020 24430275, +91 765434567</BoxText>
          </InfoBox>
        </LeftCol>
        <FormCard>
          <Label>Name</Label>
          <Input />
          <Label>Email</Label>
          <Input />
          <Label>Subject</Label>
          <Input />
          <Label>Message</Label>
          <Area placeholder="massage" />
          <Buttons>
            <Btn type="button" $bg="#007bff">Submit</Btn>
            <Btn type="button" $bg="#dc3545">Cancle</Btn>
          </Buttons>
        </FormCard>
      </Contact>
      <MapWrap>
        <TheMap />
        <InfoWin>
          <InfoMain>
            <PlaceName>Megapower Solutions Pvt. Ltd.</PlaceName>
            <PlaceAddr>Office no. 4, 1st floor,Sri Sai Tower<br />Near Baba Bhide Bridge, NC Kelkar<br />Road, 273', Narayan Peth, Pune,<br />Maharashtra 411030, India</PlaceAddr>
            <Rating>4.0<Stars>★★★★<GrayStar>★</GrayStar></Stars><BlueLink $ml={6}>4 reviews</BlueLink></Rating>
            <BlueLink $mt={6}>View larger map</BlueLink>
          </InfoMain>
          <DirBox>
            <svg width="18" height="18" viewBox="0 0 18 18">
              <path d="M2 2l6.500 7.500V18" fill="none" stroke="#8ab4f0" strokeWidth="4" />
              <path d="M8.500 10L13 5" fill="none" stroke="#4285f4" strokeWidth="3.400" />
              <path d="M10 1h7.500v7.500z" fill="#4285f4" />
            </svg>
            <BlueLink $mt={3}>Directions</BlueLink>
          </DirBox>
        </InfoWin>
        <Thumb />
        <Zoom>
          <svg width="16" height="16" viewBox="0 0 16 16"><path d="M6.500 0h3v6.500h6.500v3h-6.500v6.500h-3v-6.500h-6.500v-3h6.500z" fill="#666" /></svg>
          <ZoomSep />
          <svg width="16" height="4" viewBox="0 0 16 4"><path d="M0 .5h16v3H0z" fill="#666" /></svg>
        </Zoom>
        <Attrib>
          <AttribItem>Keyboard shortcuts</AttribItem>
          <AttribItem>Map data ©2023 Google</AttribItem>
          <AttribItem>Terms of Use</AttribItem>
          <AttribItem>Report a map error</AttribItem>
        </Attrib>
      </MapWrap>
      <Gap />
      <FooterTop>
        <div>
          <FootBrand>Apana Bazar</FootBrand>
          <FootP>Shramprateek Apartment,<br />Mitramandal Chowk, Parvati,<br />Pune, Maharashtra 411009.</FootP>
        </div>
        <div>
          <FootHead>Our Products</FootHead>
          <FootList>
            <FootItem>Dry Fruit</FootItem>
            <FootItem>Fruit</FootItem>
            <FootItem>Vegitables</FootItem>
          </FootList>
        </div>
        <div>
          <FootHead>Our Services</FootHead>
          <FootList>
            <FootItem>Delevery on Time</FootItem>
            <FootItem>Good quality</FootItem>
          </FootList>
        </div>
        <div>
          <FootHead>Contact Us</FootHead>
          <ContactLine $mt={16}><strong>Phone:</strong> +91 888888888 , +19 99999999999</ContactLine>
          <ContactLine $mt={19}><strong>Email:</strong> contact@apanabazar.com</ContactLine>
          <ContactLine>apanabazar@rediffmail.com</ContactLine>
          <Socials>
            <Social><FaTwitter /></Social>
            <Social><FaFacebookF /></Social>
            <Social><FaInstagram /></Social>
            <Social><FaSkype /></Social>
            <Social><FaLinkedinIn /></Social>
          </Socials>
        </div>
      </FooterTop>
      <FooterBottom>
        <Copy>© Copyright <strong>Apana Bazar</strong>. All Rights Reserved</Copy>
        <Credit>Designed by <CreditLink>Techsys Informatics</CreditLink></Credit>
      </FooterBottom>
    </>
  );
}
